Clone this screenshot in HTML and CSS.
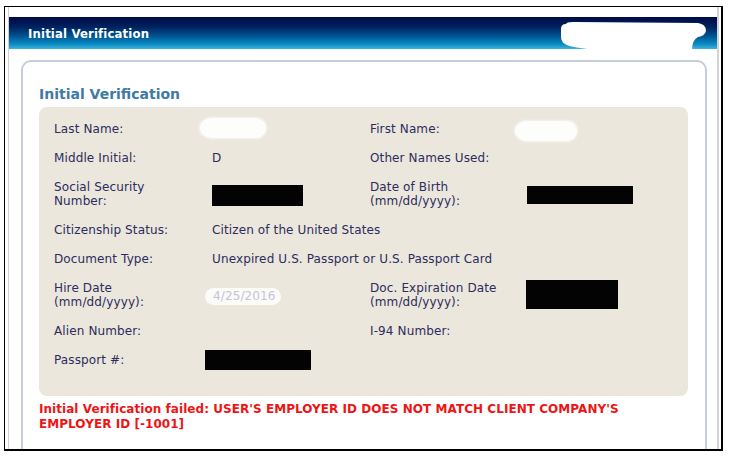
FILE: index.html
```html
<!DOCTYPE html>
<html>
<head>
<meta charset="utf-8">
<link rel="stylesheet" href="styles.css">
</head>
<body>
<div class="frame">
  <div class="inner">
    <div class="titlebar">
      <span class="title">Initial Verification</span>
      <svg class="title-blob" width="146" height="28" viewBox="0 0 146 28">
        <path d="M5,2 Q5,0 12,0 L137,1 Q145,2 145,9 Q144,14 137,15 Q131,18 131,28 L40,28 Q10,26 4,22 Q0,20 0,14 L0,7 Q0,2 5,2 Z" fill="#ffffff"/>
      </svg>
    </div>
    <div class="card">
      <h2 class="card-title">Initial Verification</h2>
      <div class="panel">
        <div class="grid">
          <div class="lbl">Last Name:</div>
          <div class="val"><span class="blob blob-last"></span></div>
          <div class="lbl">First Name:</div>
          <div class="val"><span class="blob blob-first"></span></div>

          <div class="lbl">Middle Initial:</div>
          <div class="val">D</div>
          <div class="lbl">Other Names Used:</div>
          <div class="val"></div>

          <div class="lbl">Social Security<br>Number:</div>
          <div class="val"><span class="redact r-ssn"></span></div>
          <div class="lbl">Date of Birth<br>(mm/dd/yyyy):</div>
          <div class="val"><span class="redact r-dob"></span></div>

          <div class="lbl">Citizenship Status:</div>
          <div class="val wide">Citizen of the United States</div>

          <div class="lbl">Document Type:</div>
          <div class="val wide">Unexpired U.S. Passport or U.S. Passport Card</div>

          <div class="lbl">Hire Date<br>(mm/dd/yyyy):</div>
          <div class="val"><span class="hire">4/25/2016</span></div>
          <div class="lbl">Doc. Expiration Date<br>(mm/dd/yyyy):</div>
          <div class="val"><span class="redact r-exp"></span></div>

          <div class="lbl">Alien Number:</div>
          <div class="val"></div>
          <div class="lbl">I-94 Number:</div>
          <div class="val"></div>

          <div class="lbl">Passport #:</div>
          <div class="val"><span class="redact r-pass"></span></div>
          <div class="val"></div>
          <div class="val"></div>
        </div>
      </div>
      <p class="error">Initial Verification failed: USER'S EMPLOYER ID DOES NOT MATCH CLIENT COMPANY'S EMPLOYER ID [-1001]</p>
    </div>
  </div>
</div>
</body>
</html>
```
FILE: styles.css
```css
html, body {
  margin: 0;
  padding: 0;
  background: #ffffff;
}

body {
  font-family: "DejaVu Sans", Verdana, sans-serif;
  color: #2c2c5e;
}

.frame {
  box-sizing: border-box;
  width: 719px;
  height: 445px;
  margin: 6px 0 0 4px;
  border-top: 1px solid #000;
  border-left: 1px solid #000;
  border-right: 2px solid #000;
  border-bottom: 2px solid #000;
  padding: 0 2px 0 3px;
  background: #fff;
}

.inner {
  box-sizing: border-box;
  height: 100%;
  border-left: 1px solid #cfcfcf;
  border-right: 2px solid #d4d4d4;
  padding-top: 10px;
  overflow: hidden;
}

.titlebar {
  position: relative;
  height: 32px;
  display: flex;
  align-items: center;
  padding-left: 19px;
  background: linear-gradient(to bottom, #000b45 0%, #00205e 30%, #005592 60%, #0a8cc4 85%, #41b4dc 100%);
}

.title {
  font-family: "DejaVu Sans Condensed", "DejaVu Sans", sans-serif;
  font-stretch: condensed;
  font-weight: bold;
  font-size: 13px;
  color: #ffffff;
  letter-spacing: 0.15px;
}

.title-blob {
  position: absolute;
  left: 552px;
  top: 5px;
}

.card {
  margin: 11px 10px 0 12px;
  min-height: 420px;
  border: 2px solid #c6cdd8;
  border-radius: 10px;
  background: #fff;
  padding: 0 17px 0 16px;
}

.card-title {
  margin: 0 0 4px 0;
  padding-top: 23px;
  font-size: 14px;
  line-height: 18px;
  font-weight: bold;
  color: #3f7aa3;
}

.panel {
  background: #ebe7dc;
  border-radius: 8px;
  padding: 15px 0 29px 15px;
}

.grid {
  display: grid;
  grid-template-columns: 158px 158px 157px 1fr;
  row-gap: 15px;
  align-items: center;
  font-size: 12px;
  line-height: 14px;
  letter-spacing: 0.12px;
}

.wide {
  grid-column: span 3;
}

.val {
  min-height: 14px;
}

.blob {
  display: block;
  background: #fdfdfb;
  box-shadow: 0 0 2px 1px #f6f5f0;
}

.blob-last {
  width: 66px;
  height: 20px;
  margin: -4px 0 -2px -12px;
  border-radius: 12px 11px 10px 12px / 10px 10px 10px 10px;
}

.blob-first {
  width: 62px;
  height: 20px;
  margin: -1px 0 -5px -12px;
  border-radius: 12px 10px 10px 12px / 10px 10px 10px 10px;
}

.redact {
  display: block;
  background: #030303;
}

.r-ssn {
  width: 91px;
  height: 21px;
  margin: -2px 0 -5px 0;
}

.r-dob {
  width: 106px;
  height: 18px;
  margin: -1px 0 -3px 0;
}

.r-exp {
  width: 92px;
  height: 29px;
  margin: -8px 0 -7px -1px;
}

.r-pass {
  width: 106px;
  height: 20px;
  margin: -3px 0 -3px -7px;
}

.hire {
  display: block;
  box-sizing: border-box;
  width: 76px;
  height: 17px;
  margin: 0 0 -3px -7px;
  padding-left: 8px;
  line-height: 17px;
  border-radius: 9px;
  background: #fbfbf8;
  color: #c6c4d8;
}

.error {
  margin: 6px 0 0 0;
  font-size: 12px;
  line-height: 15px;
  font-weight: bold;
  color: #ee1414;
  letter-spacing: 0.05px;
}
```
